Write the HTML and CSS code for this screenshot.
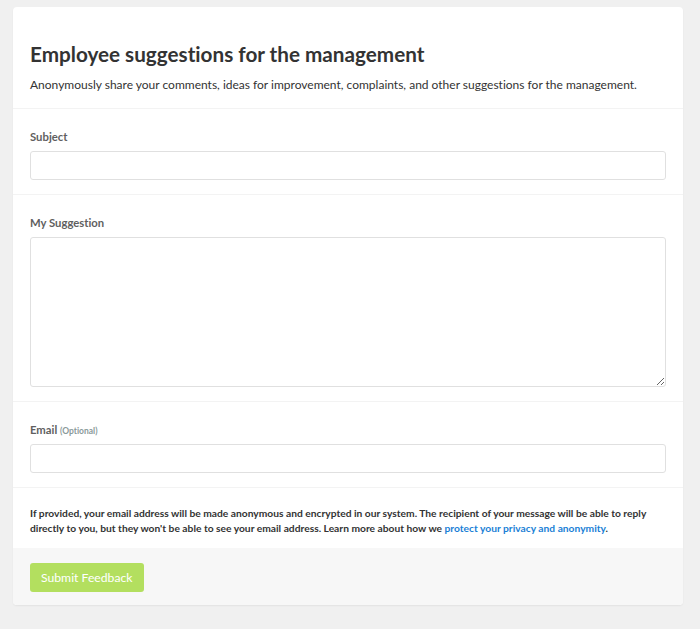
FILE: index.html
```html
<!DOCTYPE html>
<html lang="en">
<head>
<meta charset="utf-8">
<title>Employee suggestions</title>
<link rel="stylesheet" href="styles.css">
</head>
<body>
<div class="card">
  <div class="section header">
    <h1 class="title">Employee suggestions for the management</h1>
    <p class="subtitle">Anonymously share your comments, ideas for improvement, complaints, and other suggestions for the management.</p>
  </div>
  <div class="section field">
    <label class="label">Subject</label>
    <input class="input" type="text">
  </div>
  <div class="section field">
    <label class="label">My Suggestion</label>
    <textarea class="input textarea"></textarea>
  </div>
  <div class="section field">
    <label class="label">Email <span class="optional">(Optional)</span></label>
    <input class="input" type="text">
  </div>
  <div class="section info">
    <p class="info-text">If provided, your email address will be made anonymous and encrypted in our system. The recipient of your message will be able to reply directly to you, but they won't be able to see your email address. Learn more about how we <a class="link" href="#">protect your privacy and anonymity</a>.</p>
  </div>
  <div class="footer">
    <button class="button" type="button">Submit Feedback</button>
  </div>
</div>
</body>
</html>
```
FILE: styles.css
```css
html, body {
  margin: 0;
  padding: 0;
  background: #f0f0f0;
  font-family: Lato, "Liberation Sans", sans-serif;
  font-variant-ligatures: none;
  color: #333;
}
body {
  padding: 7px 17px 23px 13px;
}
.card {
  background: #fff;
  border-radius: 4px;
  box-shadow: 0 1px 2px rgba(0, 0, 0, 0.06);
  overflow: hidden;
}
.section {
  padding: 20px 17px 14px;
  border-bottom: 1px solid #f3f3f3;
  display: flex;
  flex-direction: column;
}
.header {
  padding: 34px 17px 14px;
}
.title {
  margin: 0;
  font-size: 20.7px;
  font-weight: 700;
  line-height: 26px;
  color: #333;
}
.subtitle {
  margin: 9px 0 0;
  font-size: 12px;
  line-height: 18px;
  color: #333;
}
.label {
  display: block;
  font-size: 11.3px;
  font-weight: 700;
  color: #5f5f5f;
  line-height: 16px;
  height: 16px;
  margin-bottom: 6px;
}
.optional {
  font-size: 8.5px;
  line-height: 1;
  color: #8a9a9a;
}
.input {
  box-sizing: border-box;
  height: 29px;
  width: 100%;
  border: 1px solid #e0e0e0;
  border-radius: 3px;
  background: #fff;
  margin: 0;
  font-family: inherit;
  font-size: 13px;
  display: block;
}
.textarea {
  height: 150px;
  resize: vertical;
}
.info {
  padding: 18px 17px 12px;
  border-bottom: none;
}
.info-text {
  margin: 0;
  font-size: 10.25px;
  font-weight: 700;
  line-height: 15px;
  color: #333;
}
.link {
  color: #1a7fd6;
  text-decoration: none;
}
.footer {
  background: #f7f7f7;
  padding: 15px 17px 13px;
}
.button {
  display: block;
  background: #b3df5f;
  color: #fff;
  border: none;
  border-radius: 3px;
  height: 29px;
  padding: 0 11px;
  font-family: inherit;
  font-size: 12.2px;
  font-weight: 400;
  cursor: pointer;
}
```
